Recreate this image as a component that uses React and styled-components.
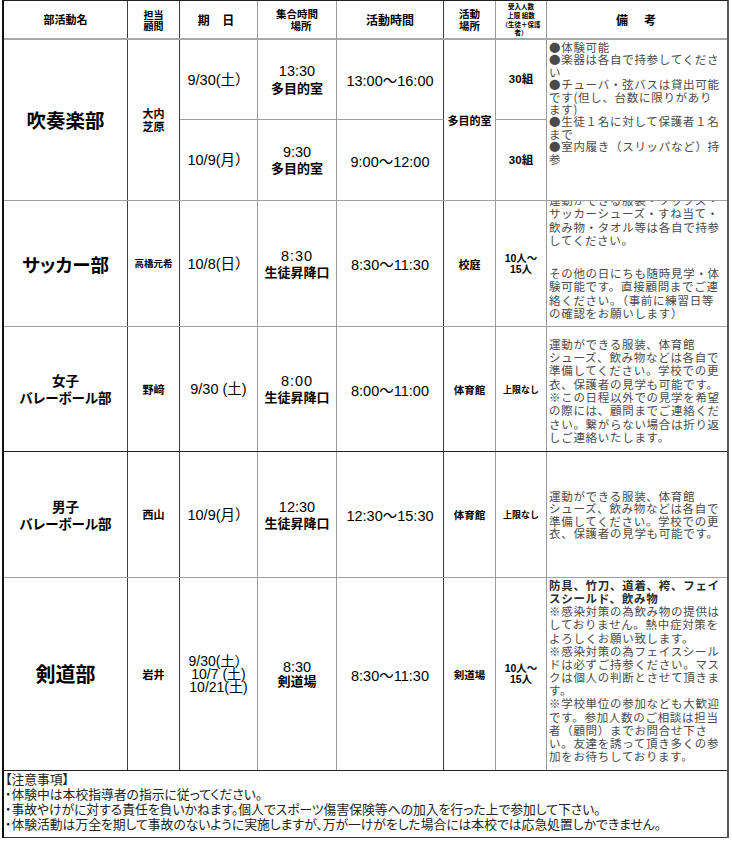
import React from "react";
import styled, { createGlobalStyle } from "styled-components";

const GlobalStyle = createGlobalStyle`
  html, body {
    margin: 0;
    padding: 0;
    background: #fff;
  }
  body {
    font-family: "Noto Sans CJK JP", "Liberation Sans", sans-serif;
    color: #000;
  }
  * {
    box-sizing: border-box;
  }
`;

const LATIN = `"Liberation Sans", "Noto Sans CJK JP", sans-serif`;
const CJK = `"Noto Sans CJK JP", sans-serif`;
const COLS = "124px 52px 78px 79px 107px 52px 51px 180px";

const Sheet = styled.div`
  width: 727px;
  margin-left: 2px;
  border-left: 2px solid #111;
  border-right: 2px solid #555;
  border-top: 1px solid #222;
`;

const Row = styled.div`
  display: grid;
  grid-template-columns: ${COLS};
  grid-template-rows: ${(p) => p.$rows};
  border-bottom: ${(p) => p.$line};
`;

const Cell = styled.div`
  display: flex;
  flex-direction: column;
  align-items: center;
  justify-content: center;
  text-align: center;
  overflow: hidden;
  min-width: 0;
  border-right: 1px solid #3c3c3c;
  ${(p) => p.$span && `grid-row: span ${p.$span};`}
  ${(p) => p.$split && "border-bottom: 1px solid #a0a0a0;"}
`;

const Soft = styled(Cell)`
  border-right-color: #9a9a9a;
`;

/* header */
const Head = styled(Cell)`
  font-family: ${CJK};
  font-weight: 700;
  font-size: ${(p) => p.$size || 11}px;
  line-height: ${(p) => p.$lh || 13}px;
  letter-spacing: ${(p) => p.$ls || 0}px;
  ${(p) => p.$soft && "border-right-color: #9a9a9a;"}
  ${(p) => p.$last && "border-right: none;"}
`;

const Indent = styled.span`
  display: block;
  margin-left: ${(p) => p.$by}px;
`;

/* body columns */
const NameCell = styled(Cell)`
  font-family: ${CJK};
  font-weight: 700;
  font-size: ${(p) => p.$size}px;
  line-height: ${(p) => p.$lh || 20}px;
  font-feature-settings: "palt";
`;

const AdvisorCell = styled(Cell)`
  font-family: ${CJK};
  font-weight: 700;
  font-size: ${(p) => p.$size || 11}px;
  line-height: 13px;
`;

const DateCell = styled(Soft)`
  font-family: ${LATIN};
  font-size: ${(p) => p.$size || 14.5}px;
  line-height: ${(p) => p.$lh || 16}px;
  white-space: nowrap;
`;

const MeetCell = styled(Soft)`
  line-height: ${(p) => p.$lh || 15.5}px;
  white-space: nowrap;
`;

const MeetTime = styled.span`
  font-family: ${LATIN};
  font-size: 14.5px;
  letter-spacing: ${(p) => p.$ls || 0}px;
`;

const MeetPlace = styled.span`
  font-family: ${CJK};
  font-size: 13px;
  font-weight: 700;
`;

const TimeCell = styled(Cell)`
  font-family: ${LATIN};
  font-size: 14.5px;
  white-space: nowrap;
`;

const PlaceCell = styled(Soft)`
  font-family: ${CJK};
  font-weight: 700;
  font-size: ${(p) => p.$size || 10.5}px;
`;

const CountCell = styled(Soft)`
  font-family: ${LATIN};
  font-weight: 700;
  font-size: ${(p) => p.$size || 11.5}px;
  line-height: 11px;
  white-space: nowrap;
`;

const Kana = styled.span`
  font-family: ${CJK};
`;

const NoteCell = styled(Cell)`
  border-right: none;
  align-items: flex-start;
  justify-content: ${(p) => (p.$top ? "flex-start" : "center")};
  text-align: left;
  padding-left: 2px;
  font-family: ${CJK};
  font-size: 11.5px;
  letter-spacing: 0.7px;
  line-height: ${(p) => p.$lh}px;
  color: #4a4a4a;
`;

const NoteLines = styled.div`
  margin-top: ${(p) => p.$shift || 0}px;
`;

const Line = styled.span`
  display: block;
  white-space: nowrap;
  ${(p) => p.$gap && `height: ${p.$gap}px;`}
  ${(p) => p.$strong && "color: #2a2a2a; font-weight: 700;"}
`;

const Notice = styled.div`
  height: 67px;
  border-bottom: 1px solid #333;
  padding: 0 0 0 1px;
  font-family: ${CJK};
  font-size: 12.8px;
  line-height: 15px;
  color: #222;
  font-feature-settings: "palt";
`;

const Lines = ({ items }) =>
  items.map((t, i) =>
    t === "" ? <Line key={i} $gap={20} /> : <Line key={i}>{t}</Line>
  );

const Stack = ({ items }) =>
  items.map((t, i) => <span key={i}>{t}</span>);

const brass = [
  "●体験可能",
  "●楽器は各自で持参してくださ",
  "い",
  "●チューバ・弦バスは貸出可能",
  "です(但し、台数に限りがあり",
  "ます)",
  "●生徒１名に対して保護者１名",
  "まで",
  "●室内履き（スリッパなど）持",
  "参",
];

const soccer = [
  "運動ができる服装・ソックス・",
  "サッカーシューズ・すね当て・",
  "飲み物・タオル等は各自で持参",
  "してください。",
  "",
  "その他の日にちも随時見学・体",
  "験可能です。直接顧問までご連",
  "絡ください。（事前に練習日等",
  "の確認をお願いします）",
];

const volleyGirls = [
  "運動ができる服装、体育館",
  "シューズ、飲み物などは各自で",
  "準備してください。学校での更",
  "衣、保護者の見学も可能です。",
  "※この日程以外での見学を希望",
  "の際には、顧問までご連絡くだ",
  "さい。繋がらない場合は折り返",
  "しご連絡いたします。",
];

const volleyBoys = volleyGirls.slice(0, 4);

const kendo = [
  "※感染対策の為飲み物の提供は",
  "しておりません。熱中症対策を",
  "よろしくお願い致します。",
  "※感染対策の為フェイスシール",
  "ドは必ずご持参ください。マス",
  "クは個人の判断とさせて頂きま",
  "す。",
  "※学校単位の参加なども大歓迎",
  "です。参加人数のご相談は担当",
  "者（顧問）までお問合せ下さ",
  "い。友達を誘って頂き多くの参",
  "加をお待ちしております。",
];

const notices = [
  "【注意事項】",
  "・体験中は本校指導者の指示に従ってください。",
  "・事故やけがに対する責任を負いかねます。個人でスポーツ傷害保険等への加入を行った上で参加して下さい。",
  "・体験活動は万全を期して事故のないように実施しますが、万が一けがをした場合には本校では応急処置しかできません。",
];

function App() {
  return (
    <>
      <GlobalStyle />
      <Sheet>
        <Row $rows="37px" $line="2px solid #a8a8a8">
          <Head>部活動名</Head>
          <Head $size={10} $lh={11}>
            <Stack items={["担当", "顧問"]} />
          </Head>
          <Head $size={12} $ls={5} $soft>期 日</Head>
          <Head $size={10.5} $lh={12} $soft>
            <span>集合時間</span>
            <Indent $by={8}>場所</Indent>
          </Head>
          <Head $size={12}>活動時間</Head>
          <Head $size={10.5} $lh={12} $soft>
            <Stack items={["活動", "場所"]} />
          </Head>
          <Head $size={6.5} $lh={8.6} $soft>
            <Stack items={["受入人数", "上限 組数", "（生徒＋保護", "者）"]} />
          </Head>
          <Head $size={12} $ls={2} $last>備　考</Head>
        </Row>

        <Row $rows="80px 80px" $line="1px solid #a0a0a0">
          <NameCell $span={2} $size={19.5}>吹奏楽部</NameCell>
          <AdvisorCell $span={2}>
            <Stack items={["大内", "芝原"]} />
          </AdvisorCell>
          <DateCell $split>9/30(土）</DateCell>
          <MeetCell $split>
            <MeetTime>13:30</MeetTime>
            <MeetPlace>多目的室</MeetPlace>
          </MeetCell>
          <TimeCell $split>13:00～16:00</TimeCell>
          <PlaceCell $span={2} $size={11}>多目的室</PlaceCell>
          <CountCell $split>30組</CountCell>
          <NoteCell $span={2} $top $lh={12.4}>
            <NoteLines $shift={1}>
              <Lines items={brass} />
            </NoteLines>
          </NoteCell>
          <DateCell>10/9(月）</DateCell>
          <MeetCell>
            <MeetTime>9:30</MeetTime>
            <MeetPlace>多目的室</MeetPlace>
          </MeetCell>
          <TimeCell>9:00～12:00</TimeCell>
          <CountCell>30組</CountCell>
        </Row>

        <Row $rows="125px" $line="1px solid #a0a0a0">
          <NameCell $size={18.5}>サッカー部</NameCell>
          <AdvisorCell $size={9.5}>高橋元希</AdvisorCell>
          <DateCell>10/8(日）</DateCell>
          <MeetCell $lh={15}>
            <MeetTime $ls={1}>8:30</MeetTime>
            <MeetPlace>生徒昇降口</MeetPlace>
          </MeetCell>
          <TimeCell>8:30～11:30</TimeCell>
          <PlaceCell $size={11}>校庭</PlaceCell>
          <CountCell $size={10.5}>
            <Stack items={["10人～", "15人"]} />
          </CountCell>
          <NoteCell $top $lh={13.3}>
            <NoteLines $shift={-7}>
              <Lines items={soccer} />
            </NoteLines>
          </NoteCell>
        </Row>

        <Row $rows="124px" $line="1px solid #222">
          <NameCell $size={13.5} $lh={17}>
            <Stack items={["女子", "バレーボール部"]} />
          </NameCell>
          <AdvisorCell>野﨑</AdvisorCell>
          <DateCell>9/30 (土)</DateCell>
          <MeetCell $lh={15}>
            <MeetTime $ls={1}>8:00</MeetTime>
            <MeetPlace>生徒昇降口</MeetPlace>
          </MeetCell>
          <TimeCell>8:00～11:00</TimeCell>
          <PlaceCell>体育館</PlaceCell>
          <CountCell $size={9}>
            <Kana>上限なし</Kana>
          </CountCell>
          <NoteCell $lh={13.3}>
            <NoteLines $shift={4}>
              <Lines items={volleyGirls} />
            </NoteLines>
          </NoteCell>
        </Row>

        <Row $rows="125px" $line="1px solid #a0a0a0">
          <NameCell $size={13.5} $lh={17}>
            <Stack items={["男子", "バレーボール部"]} />
          </NameCell>
          <AdvisorCell>西山</AdvisorCell>
          <DateCell>10/9(月）</DateCell>
          <MeetCell $lh={15}>
            <MeetTime>12:30</MeetTime>
            <MeetPlace>生徒昇降口</MeetPlace>
          </MeetCell>
          <TimeCell>12:30～15:30</TimeCell>
          <PlaceCell>体育館</PlaceCell>
          <CountCell $size={9}>
            <Kana>上限なし</Kana>
          </CountCell>
          <NoteCell $lh={12.2}>
            <NoteLines>
              <Lines items={volleyBoys} />
            </NoteLines>
          </NoteCell>
        </Row>

        <Row $rows="192px" $line="1px solid #222">
          <NameCell $size={20}>剣道部</NameCell>
          <AdvisorCell>岩井</AdvisorCell>
          <DateCell $size={14} $lh={13}>
            <Stack items={["9/30(土）", "10/7 (土)", "10/21(土)"]} />
          </DateCell>
          <MeetCell $lh={13.5}>
            <MeetTime>8:30</MeetTime>
            <MeetPlace>剣道場</MeetPlace>
          </MeetCell>
          <TimeCell>8:30～11:30</TimeCell>
          <PlaceCell>剣道場</PlaceCell>
          <CountCell $size={10.5}>
            <Stack items={["10人～", "15人"]} />
          </CountCell>
          <NoteCell $top $lh={13.15}>
            <NoteLines $shift={1}>
              <Line $strong>防具、竹刀、道着、袴、フェイ</Line>
              <Line $strong>スシールド、飲み物</Line>
              <Lines items={kendo} />
            </NoteLines>
          </NoteCell>
        </Row>

        <Notice>
          {notices.map((t) => (
            <div key={t}>{t}</div>
          ))}
        </Notice>
      </Sheet>
    </>
  );
}

export default App;
